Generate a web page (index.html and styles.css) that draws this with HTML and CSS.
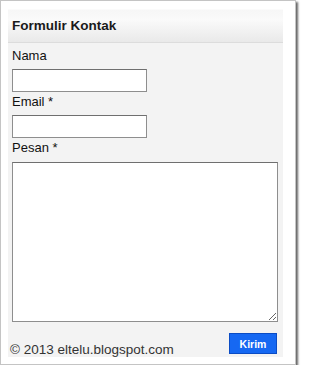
FILE: index.html
```html
<!DOCTYPE html>
<html>
<head>
<meta charset="utf-8">
<link rel="stylesheet" href="styles.css">
</head>
<body>
<div class="frame">
  <div class="panel">
    <div class="head">Formulir Kontak</div>
    <form class="form">
      <label class="lbl">Nama</label>
      <input class="inp" type="text">
      <label class="lbl">Email *</label>
      <input class="inp" type="text">
      <label class="lbl">Pesan *</label>
      <textarea class="msg"></textarea>
      <div class="foot">
        <span class="copy">© 2013 eltelu.blogspot.com</span>
        <button class="btn" type="button">Kirim</button>
      </div>
    </form>
  </div>
</div>
</body>
</html>
```

FILE: styles.css
```css
html, body { margin: 0; padding: 0; background: #fff; }
body { font-family: "Liberation Sans", Arial, sans-serif; color: #111; }
.frame {
  width: 282px;
  height: 349px;
  padding: 8px 5px 6px 7px;
  border: 1px solid #c4c4c4;
  background: #fff;
  box-shadow: 2px 2px 2px rgba(0,0,0,0.6);
}
.panel {
  width: 275px;
  height: 348px;
  background: #f3f3f3;
  display: flex;
  flex-direction: column;
}
.head {
  height: 34px;
  line-height: 32px;
  padding-left: 4px;
  font-size: 13.5px;
  font-weight: bold;
  color: #1a1a1a;
  border-top: 1px solid #fbfbfb;
  border-bottom: 1px solid #dcdcdc;
  background: linear-gradient(#f6f6f6, #fafafa 30%, #e9e9e9 100%);
  box-sizing: border-box;
}
.form {
  display: flex;
  flex-direction: column;
  padding: 5px 5px 0 4px;
  margin: 0;
}
.lbl {
  font-size: 13px;
  line-height: 16px;
  color: #111;
  margin-top: 2px;
}
.lbl:first-child { margin-top: 0; }
.inp {
  width: 135px;
  height: 23px;
  box-sizing: border-box;
  margin: 5px 0 0 0;
  padding: 0;
  border: 1px solid #8e8e8e;
  border-top-color: #6f6f6f;
  background: #fff;
}
.msg {
  width: 266px;
  height: 160px;
  box-sizing: border-box;
  margin: 6px 0 0 0;
  padding: 0;
  border: 1px solid #8e8e8e;
  border-top-color: #6f6f6f;
  background: #fff;
  resize: both;
}
.foot {
  display: flex;
  justify-content: space-between;
  align-items: flex-end;
  margin-top: 11px;
}
.copy {
  font-size: 13.5px;
  line-height: 14px;
  color: #333;
  margin-left: -2px;
  margin-bottom: -3px;
}
.btn {
  width: 48px;
  height: 21px;
  margin-right: 1px;
  padding: 0;
  border: 1px solid #0b4cc4;
  background: #1668f2;
  color: #fff;
  font-family: "Liberation Sans", Arial, sans-serif;
  font-size: 10.5px;
  font-weight: bold;
}
```
